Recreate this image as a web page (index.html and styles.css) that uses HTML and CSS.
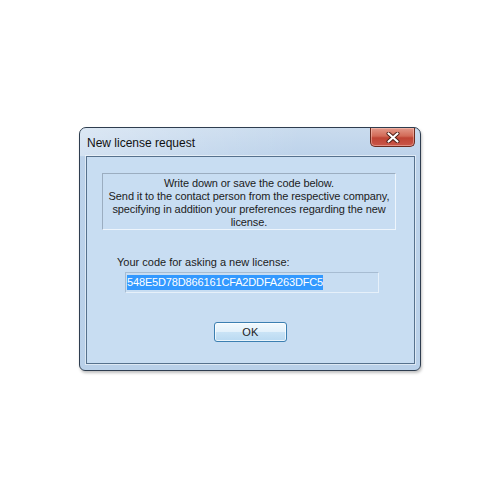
FILE: index.html
```html
<!DOCTYPE html>
<html>
<head>
<meta charset="utf-8">
<link rel="stylesheet" href="styles.css">
</head>
<body>
<div class="desktop">
  <div class="window">
    <div class="titlebar">
      <span class="title">New license request</span>
      <div class="close">
        <svg width="14" height="11" viewBox="0 0 14 11">
          <path d="M2.5 1.5 L11.5 9.5 M11.5 1.5 L2.5 9.5" stroke="#4a1c14" stroke-width="4" stroke-linecap="round"/>
          <path d="M2.5 1.5 L11.5 9.5 M11.5 1.5 L2.5 9.5" stroke="#ffffff" stroke-width="2.2" stroke-linecap="round"/>
        </svg>
      </div>
    </div>
    <div class="client">
      <div class="panel">
        Write down or save the code below.<br>
        Send it to the contact person from the respective company,<br>
        specifying in addition your preferences regarding the new<br>
        license.
      </div>
      <div class="label">Your code for asking a new license:</div>
      <div class="codebox"><span class="sel">548E5D78D866161CFA2DDFA263DFC5</span></div>
      <div class="buttons">
        <div class="ok">OK</div>
      </div>
    </div>
  </div>
</div>
</body>
</html>
```

FILE: styles.css
```css
html, body {
  margin: 0;
  padding: 0;
  background: #ffffff;
}
.desktop {
  width: 500px;
  height: 500px;
  padding: 127px 0 0 79px;
  box-sizing: border-box;
}
.window {
  width: 342px;
  height: 244px;
  box-sizing: border-box;
  border: 1px solid #2e3d4f;
  border-radius: 7px 7px 6px 6px;
  background: linear-gradient(to bottom, #c9dbee 0px, #bcd2ea 30px, #b9d0e9 100%);
  box-shadow: 1px 2px 3px rgba(0,0,0,0.25);
  display: flex;
  flex-direction: column;
  font-family: "Liberation Sans", Arial, sans-serif;
}
.titlebar {
  height: 28px;
  display: flex;
  align-items: flex-start;
  justify-content: space-between;
  background: linear-gradient(100deg, rgba(255,255,255,0.35) 0px, rgba(255,255,255,0.15) 120px, rgba(255,255,255,0) 220px);
  border-radius: 6px 6px 0 0;
}
.title {
  font-size: 12px;
  line-height: 12px;
  color: #111;
  padding: 9px 0 0 7px;
}
.close {
  width: 45px;
  height: 19px;
  margin-right: 5px;
  box-sizing: border-box;
  border: 1px solid #6b2a1e;
  border-top: none;
  border-radius: 0 0 5px 5px;
  background: linear-gradient(to bottom, #e3998a 0%, #d26a57 45%, #bf4434 55%, #c9574a 100%);
  box-shadow: inset 0 0 0 1px rgba(255,210,200,0.45);
  display: flex;
  align-items: center;
  justify-content: center;
}
.client {
  margin: 0 5px 0 6px;
  height: 208px;
  box-sizing: border-box;
  border: 1px solid #56718d;
  background: #c8ddf2;
  box-shadow: 0 0 0 1px rgba(255,255,255,0.5);
  font-size: 11px;
  color: #1c1c1c;
  display: flex;
  flex-direction: column;
}
.panel {
  margin: 16px 0 0 15px;
  width: 294px;
  height: 57px;
  box-sizing: border-box;
  border: 1px solid #eef5fc;
  border-top-color: #9badc0;
  border-left-color: #9badc0;
  padding-top: 3px;
  text-align: center;
  line-height: 13px;
  letter-spacing: -0.1px;
}
.label {
  margin: 26px 0 0 30px;
  line-height: 13px;
}
.codebox {
  margin: 3px 0 0 38px;
  width: 254px;
  height: 21px;
  box-sizing: border-box;
  border: 1px solid #a7bcd2;
  border-bottom-color: #e6f0fa;
  border-right-color: #e6f0fa;
  padding: 2px 0 0 1px;
}
.sel {
  display: inline-block;
  background: #3399ff;
  color: #ffffff;
  line-height: 15px;
  height: 15px;
  letter-spacing: -0.15px;
}
.buttons {
  display: flex;
  justify-content: center;
  margin-top: 29px;
}
.ok {
  width: 73px;
  height: 20px;
  box-sizing: border-box;
  border: 1px solid #3c7fb1;
  border-radius: 3px;
  background: linear-gradient(to bottom, #f2f9fd 0%, #e3f1fb 48%, #c9e3f6 52%, #b9d9f1 100%);
  box-shadow: inset 0 0 0 1px rgba(255,255,255,0.7);
  display: flex;
  align-items: center;
  justify-content: center;
  font-size: 11px;
  line-height: 12px;
  letter-spacing: 0.3px;
}
```
